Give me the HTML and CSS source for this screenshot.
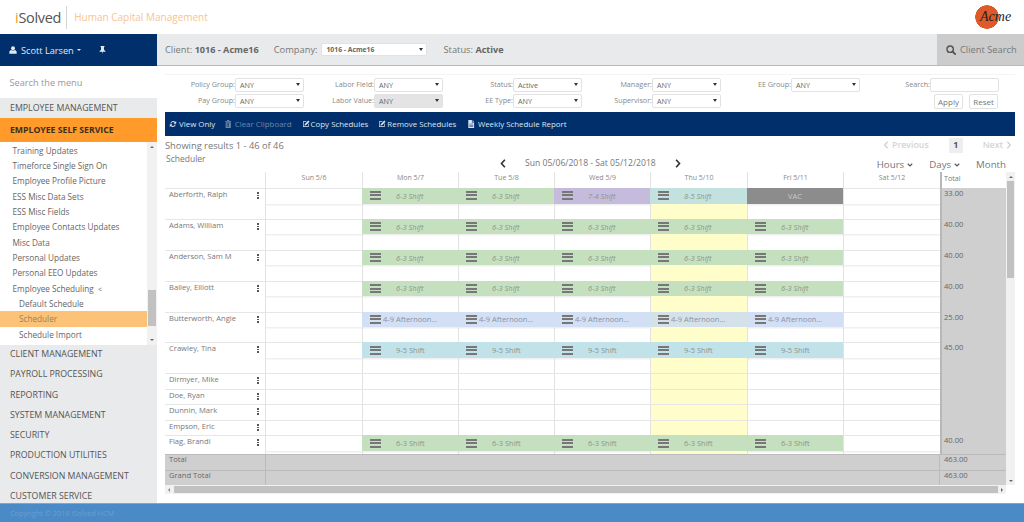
FILE: index.html
```html
<!DOCTYPE html>
<html lang="en">
<head>
    <meta charset="UTF-8">
    <meta name="viewport" content="width=device-width, initial-scale=1.0">
    <title>iSolved - Scheduler</title>
    <link rel="stylesheet" href="styles.css">
</head>
<body>
<svg class="defs" width="0" height="0">
    <symbol id="i-user" viewBox="0 0 12 12"><circle cx="6" cy="3.2" r="3"/><path d="M0.5 11.5V9.2C0.5 7.3 2 6.2 3.4 6c.7.6 1.6.9 2.6.9s1.900-.3 2.600-.9c1.400.2 2.900 1.300 2.900 3.200v2.300z"/></symbol>
    <symbol id="i-pin" viewBox="0 0 10 12"><path d="M2 0h6v1L7.200 1.600V5.500L9.500 7.800V8.800H5.600L5 12 4.400 8.800H.5V7.800L2.800 5.500V1.600L2 1z"/></symbol>
    <symbol id="i-search" viewBox="0 0 12 12"><circle cx="5" cy="5" r="3.800" fill="none" stroke="currentColor" stroke-width="1.700"/><path d="M7.800 7.800L11 11" stroke="currentColor" stroke-width="2.200" stroke-linecap="round"/></symbol>
    <symbol id="i-refresh" viewBox="0 0 12 12"><path d="M2 5A4.200 4.200 0 0 1 9.300 3L10.800 1.500V5.500H6.800L8.300 4A2.800 2.800 0 0 0 3.400 5.200zM10 7A4.200 4.200 0 0 1 2.700 9L1.200 10.500V6.500H5.200L3.700 8A2.800 2.800 0 0 0 8.600 6.800z"/></symbol>
    <symbol id="i-trash" viewBox="0 0 10 12"><path d="M3.500 0h3l.6 1.300H10v1.200H0V1.300h2.900zM1 3.300h8V12H1zM2.800 4.500v6h.9v-6zm2 0v6h.9v-6zm-.5 0z"/></symbol>
    <symbol id="i-edit" viewBox="0 0 12 12"><path d="M1.500 2H7L6 3H2.500v6.500H9V6l1-1v5.500H1.500z"/><path d="M9.500.8l1.700 1.700-5.200 5.200-2.200.5.500-2.200z"/></symbol>
    <symbol id="i-file" viewBox="0 0 10 12"><path d="M.5 0H6v3.500h3.500V12H.5zM7 0l2.500 2.500H7zM2 5.500v.9h6v-.9zm0 2v.9h6v-.9zm0 2v.9h6v-.9z" fill-rule="evenodd"/></symbol>
    <symbol id="i-left" viewBox="0 0 8 12"><path d="M6.500 1L2 6l4.500 5" fill="none" stroke="currentColor" stroke-width="2.200"/></symbol>
    <symbol id="i-right" viewBox="0 0 8 12"><path d="M1.500 1L6 6l-4.500 5" fill="none" stroke="currentColor" stroke-width="2.200"/></symbol>
    <symbol id="i-down" viewBox="0 0 12 8"><path d="M1.500 1.500L6 6l4.500-4.500" fill="none" stroke="currentColor" stroke-width="2.200"/></symbol>
</svg>

<header class="brand-bar">
    <div class="brand">
        <span class="brand-name"><b>i</b>Solved</span>
        <span class="brand-tag">Human Capital Management</span>
    </div>
    <div class="client-logo">Acme</div>
</header>

<div class="page">
    <aside class="sidebar">
        <div class="user-bar">
            <svg class="ico-user"><use href="#i-user"/></svg>
            <span>Scott Larsen</span>
            <i class="caret"></i>
            <svg class="ico-pin"><use href="#i-pin"/></svg>
        </div>
        <div class="menu-search">Search the menu</div>
        <div class="menu-head">EMPLOYEE MANAGEMENT</div>
        <div class="menu-head active">EMPLOYEE SELF SERVICE</div>
        <div class="submenu">
            <ul>
                <li>Training Updates</li>
                <li>Timeforce Single Sign On</li>
                <li>Employee Profile Picture</li>
                <li>ESS Misc Data Sets</li>
                <li>ESS Misc Fields</li>
                <li>Employee Contacts Updates</li>
                <li>Misc Data</li>
                <li>Personal Updates</li>
                <li>Personal EEO Updates</li>
                <li>Employee Scheduling &nbsp;<small>&lt;</small></li>
                <li class="child">Default Schedule</li>
                <li class="child current">Scheduler</li>
                <li class="child">Schedule Import</li>
            </ul>
            <div class="menu-scroll">
                <i class="arr up"></i>
                <div class="menu-thumb"></div>
                <i class="arr down"></i>
            </div>
        </div>
        <div class="menu-list">
            <div>CLIENT MANAGEMENT</div>
            <div>PAYROLL PROCESSING</div>
            <div>REPORTING</div>
            <div>SYSTEM MANAGEMENT</div>
            <div>SECURITY</div>
            <div>PRODUCTION UTILITIES</div>
            <div>CONVERSION MANAGEMENT</div>
            <div>CUSTOMER SERVICE</div>
        </div>
    </aside>

    <main class="main">
        <div class="top-bar">
            <span class="top-item">Client: <b>1016 - Acme16</b></span>
            <span class="top-item company">Company:
                <span class="pick wide">1016 - Acme16<i class="tri"></i></span>
            </span>
            <span class="top-item status">Status: <b>Active</b></span>
            <div class="client-search"><svg><use href="#i-search"/></svg>Client Search</div>
        </div>

        <div class="panel">
            <div class="filters">
                <label>Policy Group:</label><div class="pick">ANY<i class="tri"></i></div>
                <label>Labor Field:</label><div class="pick">ANY<i class="tri"></i></div>
                <label>Status:</label><div class="pick">Active<i class="tri"></i></div>
                <label>Manager:</label><div class="pick">ANY<i class="tri"></i></div>
                <label>EE Group:</label><div class="pick">ANY<i class="tri"></i></div>
                <label>Search:</label><input type="text" class="search-box">

                <label>Pay Group:</label><div class="pick">ANY<i class="tri"></i></div>
                <label>Labor Value:</label><div class="pick off">ANY<i class="tri"></i></div>
                <label>EE Type:</label><div class="pick">ANY<i class="tri"></i></div>
                <label>Supervisor:</label><div class="pick">ANY<i class="tri"></i></div>
                <div class="filter-btns"><button>Apply</button><button>Reset</button></div>
            </div>

            <div class="toolbar">
                <span class="tool"><svg class="s9"><use href="#i-refresh"/></svg>View Only</span>
                <span class="tool dim"><svg class="s7"><use href="#i-trash"/></svg>Clear Clipboard</span>
                <span class="tool tight"><svg class="s9"><use href="#i-edit"/></svg>Copy Schedules</span>
                <span class="tool tight"><svg class="s9"><use href="#i-edit"/></svg>Remove Schedules</span>
                <span class="tool report"><svg class="s7"><use href="#i-file"/></svg>Weekly Schedule Report</span>
            </div>

            <div class="results-bar">
                <span>Showing results 1 - 46 of 46</span>
                <div class="pager">
                    <span class="pg-link"><svg><use href="#i-left"/></svg>Previous</span>
                    <span class="pg-num">1</span>
                    <span class="pg-link">Next<svg><use href="#i-right"/></svg></span>
                </div>
            </div>

            <div class="cal-bar">
                <span class="cal-title">Scheduler</span>
                <div class="cal-nav">
                    <svg><use href="#i-left"/></svg>
                    <span>Sun 05/06/2018 - Sat 05/12/2018</span>
                    <svg><use href="#i-right"/></svg>
                </div>
                <div class="cal-views">
                    <span>Hours<svg><use href="#i-down"/></svg></span>
                    <span>Days<svg><use href="#i-down"/></svg></span>
                    <span>Month</span>
                </div>
            </div>

            <div class="sched">
                <div class="sched-grid">
                    <div class="row head">
                        <div class="name"></div>
                        <div class="day">Sun 5/6</div><div class="day">Mon 5/7</div><div class="day">Tue 5/8</div><div class="day">Wed 5/9</div><div class="day">Thu 5/10</div><div class="day">Fri 5/11</div><div class="day">Sat 5/12</div>
                        <div class="total">Total</div>
                    </div>
                    <div class="sched-body">
                        <div class="row tall">
                            <div class="name">Aberforth, Ralph<i class="kebab"></i></div>
                            <div class="day"></div>
                            <div class="day"><span class="shift green">6-3 Shift</span></div>
                            <div class="day"><span class="shift green">6-3 Shift</span></div>
                            <div class="day"><span class="shift purple">7-4 Shift</span></div>
                            <div class="day today"><span class="shift teal">8-5 Shift</span></div>
                            <div class="day"><span class="shift vac">VAC</span></div>
                            <div class="day"></div>
                            <div class="total">33.00</div>
                        </div>
                        <div class="row tall">
                            <div class="name">Adams, William<i class="kebab"></i></div>
                            <div class="day"></div>
                            <div class="day"><span class="shift green">6-3 Shift</span></div>
                            <div class="day"><span class="shift green">6-3 Shift</span></div>
                            <div class="day"><span class="shift green">6-3 Shift</span></div>
                            <div class="day today"><span class="shift green">6-3 Shift</span></div>
                            <div class="day"><span class="shift green">6-3 Shift</span></div>
                            <div class="day"></div>
                            <div class="total">40.00</div>
                        </div>
                        <div class="row tall">
                            <div class="name">Anderson, Sam M<i class="kebab"></i></div>
                            <div class="day"></div>
                            <div class="day"><span class="shift green">6-3 Shift</span></div>
                            <div class="day"><span class="shift green">6-3 Shift</span></div>
                            <div class="day"><span class="shift green">6-3 Shift</span></div>
                            <div class="day today"><span class="shift green">6-3 Shift</span></div>
                            <div class="day"><span class="shift green">6-3 Shift</span></div>
                            <div class="day"></div>
                            <div class="total">40.00</div>
                        </div>
                        <div class="row tall">
                            <div class="name">Bailey, Elliott<i class="kebab"></i></div>
                            <div class="day"></div>
                            <div class="day"><span class="shift green">6-3 Shift</span></div>
                            <div class="day"><span class="shift green">6-3 Shift</span></div>
                            <div class="day"><span class="shift green">6-3 Shift</span></div>
                            <div class="day today"><span class="shift green">6-3 Shift</span></div>
                            <div class="day"><span class="shift green">6-3 Shift</span></div>
                            <div class="day"></div>
                            <div class="total">40.00</div>
                        </div>
                        <div class="row tall">
                            <div class="name">Butterworth, Angie<i class="kebab"></i></div>
                            <div class="day"></div>
                            <div class="day"><span class="shift blue">4-9 Afternoon...</span></div>
                            <div class="day"><span class="shift blue">4-9 Afternoon...</span></div>
                            <div class="day"><span class="shift blue">4-9 Afternoon...</span></div>
                            <div class="day today"><span class="shift blue dull">4-9 Afternoon...</span></div>
                            <div class="day"><span class="shift blue">4-9 Afternoon...</span></div>
                            <div class="day"></div>
                            <div class="total">25.00</div>
                        </div>
                        <div class="row tall">
                            <div class="name">Crawley, Tina<i class="kebab"></i></div>
                            <div class="day"></div>
                            <div class="day"><span class="shift sky plain">9-5 Shift</span></div>
                            <div class="day"><span class="shift sky plain">9-5 Shift</span></div>
                            <div class="day"><span class="shift sky plain">9-5 Shift</span></div>
                            <div class="day today"><span class="shift sky plain">9-5 Shift</span></div>
                            <div class="day"><span class="shift sky plain">9-5 Shift</span></div>
                            <div class="day"></div>
                            <div class="total">45.00</div>
                        </div>
                        <div class="row">
                            <div class="name">Dirmyer, Mike<i class="kebab"></i></div>
                            <div class="day"></div><div class="day"></div><div class="day"></div><div class="day"></div><div class="day today"></div><div class="day"></div><div class="day"></div>
                            <div class="total"></div>
                        </div>
                        <div class="row">
                            <div class="name">Doe, Ryan<i class="kebab"></i></div>
                            <div class="day"></div><div class="day"></div><div class="day"></div><div class="day"></div><div class="day today"></div><div class="day"></div><div class="day"></div>
                            <div class="total"></div>
                        </div>
                        <div class="row">
                            <div class="name">Dunnin, Mark<i class="kebab"></i></div>
                            <div class="day"></div><div class="day"></div><div class="day"></div><div class="day"></div><div class="day today"></div><div class="day"></div><div class="day"></div>
                            <div class="total"></div>
                        </div>
                        <div class="row">
                            <div class="name">Empson, Eric<i class="kebab"></i></div>
                            <div class="day"></div><div class="day"></div><div class="day"></div><div class="day"></div><div class="day today"></div><div class="day"></div><div class="day"></div>
                            <div class="total"></div>
                        </div>
                        <div class="row tall">
                            <div class="name">Flag, Brandi<i class="kebab"></i></div>
                            <div class="day"></div>
                            <div class="day"><span class="shift green plain">6-3 Shift</span></div>
                            <div class="day"><span class="shift green plain">6-3 Shift</span></div>
                            <div class="day"><span class="shift green plain">6-3 Shift</span></div>
                            <div class="day today"><span class="shift green plain">6-3 Shift</span></div>
                            <div class="day"><span class="shift green plain">6-3 Shift</span></div>
                            <div class="day"></div>
                            <div class="total">40.00</div>
                        </div>
                    </div>
                    <div class="sum"><div class="sum-label">Total</div><div class="sum-fill"></div><div class="sum-total">463.00</div></div>
                    <div class="sum"><div class="sum-label">Grand Total</div><div class="sum-fill"></div><div class="sum-total">463.00</div></div>
                </div>
                <div class="v-scroll">
                    <i class="arr up"></i>
                    <div class="v-thumb"></div>
                    <i class="arr down"></i>
                </div>
            </div>
            <div class="h-scroll">
                <i class="arr left"></i>
                <div class="h-thumb"></div>
                <i class="arr right"></i>
            </div>
        </div>
    </main>
</div>

<footer class="footer">Copyright © 2018 iSolved HCM</footer>
</body>
</html>
```

FILE: styles.css
```css
* {
    box-sizing: border-box;
}
html, body {
    height: 100%;
    margin: 0;
}
body {
    display: flex;
    flex-direction: column;
    overflow: hidden;
    font-family: "Open Sans", Arial, sans-serif;
    font-size: 9px;
    color: #666;
    background-color: white;
}
svg {
    fill: currentColor;
    flex: none;
}
.defs {
    position: absolute;
}

/* brand bar */
.brand-bar {
    height: 34px;
    flex: none;
    display: flex;
    align-items: center;
    justify-content: space-between;
    padding: 0 9px 0 15px;
}
.brand {
    display: flex;
    align-items: center;
    height: 23px;
}
.brand-name {
    font-size: 14.500px;
    color: #555;
    letter-spacing: -0.3px;
    padding-right: 5px;
    line-height: 23px;
    border-right: 1px solid #d5d5d5;
}
.brand-name b {
    font-weight: normal;
    color: #f39a32;
}
.brand-tag {
    margin-left: 7px;
    font-size: 10px;
    color: #f8c48f;
}
.client-logo {
    width: 40px;
    height: 24px;
    padding-left: 5px;
    background: radial-gradient(circle at 12px 12px, #de5a2a 11.500px, transparent 12px);
    font-family: "Liberation Serif", serif;
    font-style: italic;
    font-size: 14px;
    line-height: 24px;
    color: #222;
}

.page {
    flex: 1;
    display: flex;
    min-height: 0;
}

/* sidebar */
.sidebar {
    width: 157px;
    flex: none;
    background-color: #e9eaeb;
    display: flex;
    flex-direction: column;
}
.user-bar {
    height: 32px;
    flex: none;
    background-color: #002f6c;
    color: #e3e8f0;
    display: flex;
    align-items: center;
    padding-left: 9px;
    font-size: 9.200px;
}
.ico-user {
    width: 8px;
    height: 8px;
    margin-right: 4px;
}
.ico-pin {
    width: 7px;
    height: 8px;
    margin-left: 18px;
}
.caret {
    width: 0;
    height: 0;
    margin-left: 3px;
    border-left: 2.500px solid transparent;
    border-right: 2.500px solid transparent;
    border-top: 2.500px solid #e3e8f0;
}
.menu-search {
    height: 32px;
    flex: none;
    background-color: white;
    padding-left: 9.500px;
    line-height: 34px;
    font-size: 9.200px;
    color: #999;
}
.menu-head {
    height: 20px;
    flex: none;
    padding-left: 10px;
    line-height: 20px;
    font-size: 8.800px;
    color: #555;
}
.menu-head.active {
    height: 24px;
    line-height: 25px;
    background-color: #ff9a2b;
    color: #3a3020;
    font-weight: 700;
    font-size: 8.700px;
}
.submenu {
    height: 203px;
    flex: none;
    background-color: white;
    display: flex;
}
.submenu ul {
    list-style: none;
    margin: 0;
    padding: 0;
    padding-top: 0.500px;
    flex: 1;
}
.submenu li {
    height: 15.350px;
    line-height: 15.350px;
    padding-left: 12.500px;
    font-size: 8.200px;
    color: #666;
}
.submenu small {
    font-size: 7px;
}
.submenu .child {
    padding-left: 19px;
}
.submenu .current {
    background-color: #fcc277;
    color: #9a8258;
}
.menu-scroll {
    width: 10px;
    background-color: #f1f1f1;
    display: flex;
    flex-direction: column;
    align-items: center;
    justify-content: space-between;
    padding: 4px 0;
}
.menu-thumb {
    width: 8px;
    height: 36px;
    margin-top: 129px;
    background-color: #c1c1c1;
}
.menu-list {
    flex: 1;
    min-height: 0;
    overflow: hidden;
}
.menu-list div {
    height: 20.300px;
    line-height: 18px;
    padding-left: 10px;
    font-size: 8.800px;
    color: #555;
}

/* small scrollbar arrows */
.arr {
    width: 0;
    height: 0;
    flex: none;
    border: 2px solid transparent;
}
.arr.up {
    border-top: 0;
    border-bottom: 2.500px solid #666;
}
.arr.down {
    border-bottom: 0;
    border-top: 2.500px solid #666;
}
.arr.left {
    border-left: 0;
    border-right: 2.500px solid #888;
}
.arr.right {
    border-right: 0;
    border-left: 2.500px solid #666;
}

/* main */
.main {
    flex: 1;
    min-width: 0;
}
.top-bar {
    height: 32px;
    background-color: #e9eaeb;
    border-bottom: 1px solid #a9bdd6;
    display: flex;
    align-items: center;
    padding-left: 8px;
    font-size: 9.300px;
    color: #777;
}
.top-item b {
    font-size: 9.100px;
    font-weight: 700;
    color: #666;
}
.top-item.company {
    display: flex;
    align-items: center;
    gap: 4px;
    margin-left: 15px;
}
.top-item.status {
    margin-left: 16px;
}
.client-search {
    margin-left: auto;
    width: 87px;
    height: 31px;
    background-color: #ccc;
    display: flex;
    align-items: center;
    padding-left: 9px;
    gap: 4px;
    color: #777;
}
.client-search svg {
    width: 10px;
    height: 10px;
    color: #555;
}
.panel {
    margin: 8px 9px 0 8px;
}

/* filters */
.filters {
    display: grid;
    grid-template-columns: repeat(6, 70px 69px);
    grid-template-rows: 16px 18px;
    padding-top: 3px;
    align-items: start;
    border-top: 1px solid #f4f4f4;
    height: 38px;
}
.filters label {
    text-align: right;
    font-size: 7.200px;
    line-height: 13px;
    color: #888;
}
.pick {
    height: 13.500px;
    border: 1px solid #e2e2e2;
    border-radius: 2px;
    background-color: white;
    display: flex;
    align-items: center;
    justify-content: space-between;
    padding: 0 4px;
    font-size: 7.200px;
    color: #666;
}
.pick.off {
    background-color: #e4e4e4;
}
.pick.wide {
    width: 106px;
    font-weight: 700;
    font-size: 6.800px;
}
.tri {
    width: 0;
    height: 0;
    margin-right: -1px;
    border-left: 2px solid transparent;
    border-right: 2px solid transparent;
    border-top: 3.500px solid #333;
}
.search-box {
    width: 69px;
    height: 13.500px;
    padding: 0;
    border: 1px solid #e2e2e2;
    border-radius: 2px;
}
.filter-btns {
    grid-column: 11 / span 2;
    display: flex;
    justify-content: flex-end;
    gap: 6px;
    padding-right: 1px;
}
.filter-btns button {
    width: 29px;
    height: 14.500px;
    padding: 0;
    border: 1px solid #e2e2e2;
    border-radius: 2px;
    background-color: white;
    font-family: inherit;
    font-size: 8px;
    color: #777;
}

/* toolbar */
.toolbar {
    height: 24px;
    background-color: #002f6c;
    color: #dfe5ee;
    display: flex;
    align-items: center;
    padding-left: 4px;
    gap: 10px;
    font-size: 7.900px;
}
.tool {
    display: flex;
    align-items: center;
    gap: 2px;
}
.tool.dim {
    color: #6f87a8;
}
.tool.tight {
    gap: 1px;
}
.tool.report {
    margin-left: 2px;
}
.s9 {
    width: 8px;
    height: 8px;
}
.s7 {
    width: 6.500px;
    height: 8px;
    margin-right: 1px;
}

/* results and calendar bars */
.results-bar {
    height: 16px;
    margin-top: 1px;
    display: flex;
    align-items: center;
    justify-content: space-between;
    font-size: 9.300px;
    color: #777;
    padding-right: 3px;
}
.pager {
    display: flex;
    align-items: center;
    gap: 20px;
    font-weight: 600;
    font-size: 8.800px;
}
.pg-link {
    display: flex;
    align-items: center;
    gap: 3px;
    color: #d4d4d4;
}
.pg-link svg {
    width: 6px;
    height: 8px;
}
.pg-num {
    width: 14px;
    height: 15px;
    background-color: #eee;
    color: #555;
    text-align: center;
    line-height: 15px;
    font-weight: 700;
}
.cal-bar {
    height: 19px;
    display: flex;
    padding-left: 1px;
    color: #777;
}
.cal-title {
    width: 39px;
    font-size: 8.500px;
    line-height: 11px;
}
.cal-nav {
    display: flex;
    align-items: center;
    gap: 19px;
    height: 12px;
    margin-left: 295px;
    margin-top: 4px;
    font-size: 8.600px;
    color: #777;
}
.cal-nav svg {
    width: 6px;
    height: 9px;
    color: #333;
}
.cal-views {
    margin-left: auto;
    padding-right: 9px;
    display: flex;
    gap: 16px;
    padding-top: 4px;
    font-size: 9.700px;
    line-height: 19px;
    height: 19px;
}
.cal-views span {
    display: flex;
    align-items: center;
    gap: 3px;
}
.cal-views svg {
    width: 6px;
    height: 4px;
    color: #555;
}

/* schedule grid */
.sched {
    display: flex;
    height: 313px;
}
.sched-grid {
    width: 841px;
    flex: none;
    display: flex;
    flex-direction: column;
}
.row {
    display: grid;
    grid-template-columns: 100px 97px 96px 96px 96px 97px 96px 97px 1fr;
    height: 15.500px;
    border-top: 1px solid #e6e6e6;
}
.row.tall {
    height: 30.900px;
}
.row.head {
    height: 16px;
    border-top: 0;
    font-size: 7px;
    text-align: center;
    line-height: 12px;
    color: #888;
}
.sched-body {
    height: 266px;
    overflow: hidden;
}
.name {
    display: flex;
    justify-content: space-between;
    padding: 1px 6px 0 4px;
    font-size: 7.600px;
    line-height: 9px;
    color: #777;
}
.kebab {
    width: 2px;
    height: 7px;
    margin-top: 2px;
    background: repeating-linear-gradient(#555 0 1.600px, transparent 1.600px 2.700px);
}
.day {
    border-left: 1px solid #e2e2e2;
    min-width: 0;
}
.tall .day {
    background: linear-gradient(#efefef, #efefef) 0 14.500px / 100% 1.500px no-repeat;
}
.day.today,
.tall .day.today {
    background: #fffecb;
}
.total {
    border-left: 2px solid #b8b8b8;
    background-color: #cfcfcf;
    padding: 0 0 0 2px;
    font-size: 7.600px;
    line-height: 10px;
    color: #666;
    margin-top: -1px;
}
.head .total {
    background-color: white;
    margin: 0;
    line-height: 12px;
    text-align: left;
    color: #777;
    font-size: 7.200px;
}
.shift {
    display: flex;
    align-items: center;
    height: 15.500px;
    margin: -1px 0 0 -1px;
    padding-left: 8px;
    gap: 15px;
    font-size: 7.500px;
    font-style: italic;
    color: #8c9689;
}
.shift::before {
    content: "";
    width: 11px;
    height: 9px;
    flex: none;
    background: repeating-linear-gradient(#777 0 2px, transparent 2px 3.500px);
}
.shift.plain {
    font-style: normal;
}
.green {
    background-color: #c5e0bf;
}
.purple {
    background-color: #c5bbdc;
}
.teal {
    background-color: #c3e2df;
}
.blue {
    background-color: #d2dff5;
    font-style: normal;
    gap: 2px;
    color: #8b93a3;
}
.blue.dull {
    background-color: #d5e1e9;
}
.sky {
    background-color: #c2e2ea;
}
.vac {
    background-color: #8c8c8c;
    color: #c9c9c9;
    justify-content: center;
    padding-left: 0;
    font-style: normal;
}
.vac::before {
    display: none;
}
.sum {
    display: grid;
    grid-template-columns: 100px 1fr 67px;
    height: 15.500px;
    flex: none;
    background-color: #cfcfcf;
    border-top: 1px solid #bbb;
    font-size: 7.600px;
    line-height: 9px;
    color: #666;
}
.sum-label {
    padding-left: 4px;
}
.sum-fill {
    border-left: 1px solid #bbb;
}
.sum-total {
    border-left: 1px solid #bbb;
    padding-left: 4px;
}
.v-scroll {
    width: 9px;
    background-color: #f1f1f1;
    display: flex;
    flex-direction: column;
    align-items: center;
    padding: 4px 0 3px;
}
.v-thumb {
    width: 7px;
    height: 97px;
    margin-top: 3px;
    margin-bottom: auto;
    background-color: #c1c1c1;
}
.h-scroll {
    height: 9px;
    width: 841px;
    background-color: #f1f1f1;
    display: flex;
    align-items: center;
    padding: 0 3px;
}
.h-thumb {
    flex: 1;
    height: 7px;
    margin: 0 3px 0 4px;
    background-color: #c1c1c1;
}

.footer {
    height: 19px;
    flex: none;
    background-color: #4a8ac7;
    border-top: 1px solid #7aa8d6;
    padding-left: 10px;
    font-size: 7.300px;
    line-height: 18px;
    color: #6a9fd2;
}
```
